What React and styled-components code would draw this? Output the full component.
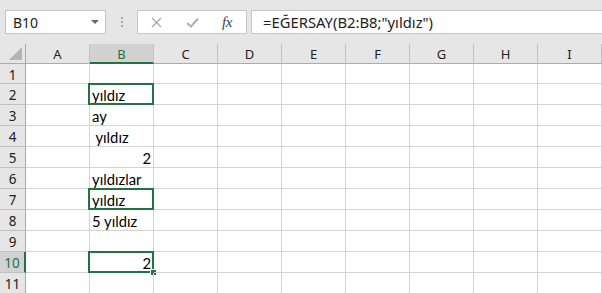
import React from 'react';
import styled, { createGlobalStyle } from 'styled-components';

const GlobalStyle = createGlobalStyle`
    html, body {
        margin: 0;
        padding: 0;
        background: #ffffff;
        overflow: hidden;
    }
`;

const Page = styled.div`
    width: 602px;
    height: 293px;
    overflow: hidden;
    font-family: "Noto Sans", "Open Sans", sans-serif;
`;

const Toolbar = styled.div`
    height: 44px;
    background: #e6e6e6;
    display: flex;
    align-items: flex-start;
    padding-top: 10px;
    padding-left: 5px;
    box-sizing: border-box;
`;

const NameBox = styled.div`
    width: 101px;
    height: 24px;
    box-sizing: border-box;
    background: #ffffff;
    border: 1px solid #c6c6c6;
    display: flex;
    align-items: center;
    justify-content: space-between;
    padding: 0 6px 0 7px;
    font-size: 14px;
    color: #222;
`;

const Caret = styled.span`
    width: 0;
    height: 0;
    border-left: 4px solid transparent;
    border-right: 4px solid transparent;
    border-top: 4px solid #6a6a6a;
`;

const Grip = styled.div`
    width: 31px;
    height: 24px;
    display: flex;
    flex-direction: column;
    align-items: center;
    justify-content: center;
    gap: 2px;
    & span {
        width: 2px;
        height: 2px;
        background: #a8a8a8;
    }
`;

const ButtonBox = styled.div`
    width: 110px;
    height: 24px;
    box-sizing: border-box;
    background: #ffffff;
    border: 1px solid #c6c6c6;
    display: flex;
    align-items: center;
    padding-left: 13px;
    gap: 24px;
`;

const Fx = styled.span`
    font-family: "Liberation Serif", serif;
    font-style: italic;
    font-size: 15px;
    color: #444;
    margin-left: -1px;
    letter-spacing: -0.5px;
`;

const FormulaBox = styled.div`
    flex: 1;
    margin-left: 4px;
    margin-right: -10px;
    height: 24px;
    box-sizing: border-box;
    background: #ffffff;
    border: 1px solid #c6c6c6;
    display: flex;
    align-items: center;
    padding-left: 11px;
    font-size: 14.8px;
    color: #222;
    white-space: nowrap;
`;

const Grid = styled.div`
    display: flex;
    flex-direction: column;
`;

const Row = styled.div`
    display: flex;
    height: ${p => p.h}px;
`;

const Corner = styled.div`
    width: 26px;
    box-sizing: border-box;
    background: #e6e6e6;
    border-right: 1px solid #ababab;
    border-bottom: 1px solid #ababab;
    position: relative;
    &::after {
        content: '';
        position: absolute;
        right: 3px;
        bottom: 3px;
        width: 0;
        height: 0;
        border-left: 13px solid transparent;
        border-bottom: 13px solid #b4b4b4;
    }
`;

const ColHead = styled.div`
    width: 64px;
    box-sizing: border-box;
    background: ${p => (p.active ? '#d2d2d2' : '#e6e6e6')};
    border-right: 1px solid #c0c0c0;
    border-bottom: ${p => (p.active ? '2px solid #217346' : '1px solid #ababab')};
    display: flex;
    align-items: center;
    justify-content: center;
    padding-top: ${p => (p.active ? '1px' : '0')};
    font-size: 13px;
    color: ${p => (p.active ? '#217346' : '#222')};
`;

const RowHead = styled.div`
    width: 26px;
    box-sizing: border-box;
    background: ${p => (p.active ? '#d2d2d2' : '#e6e6e6')};
    border-right: ${p => (p.active ? '2px solid #217346' : '1px solid #ababab')};
    border-bottom: 1px solid #c0c0c0;
    display: flex;
    align-items: center;
    justify-content: center;
    padding-top: 2px;
    font-size: 13.5px;
    color: ${p => (p.active ? '#217346' : '#222')};
`;

const Cell = styled.div`
    width: 64px;
    box-sizing: border-box;
    border-right: 1px solid #d4d4d4;
    border-bottom: 1px solid #d4d4d4;
    position: relative;
    display: flex;
    align-items: flex-end;
    justify-content: ${p => (p.num ? 'flex-end' : 'flex-start')};
    padding: 0 2px 1px 2px;
    font-family: "Lato", "Carlito", sans-serif;
    font-size: 14.8px;
    line-height: 16px;
    color: #000;
    white-space: pre;
`;

const Outline = styled.div`
    position: absolute;
    top: -1px;
    left: -2px;
    right: -1px;
    bottom: -1px;
    border: 2px solid #217346;
    pointer-events: none;
`;

const Handle = styled.div`
    position: absolute;
    right: -4px;
    bottom: -4px;
    width: 5px;
    height: 5px;
    background: #217346;
    border: 1px solid #ffffff;
`;

const columns = ['A', 'B', 'C', 'D', 'E', 'F', 'G', 'H', 'I'];

const data = {
    2: { text: 'yıldız', box: true },
    3: { text: 'ay' },
    4: { text: ' yıldız' },
    5: { text: '2', num: true },
    6: { text: 'yıldızlar' },
    7: { text: 'yıldız', box: true },
    8: { text: '5 yıldız' },
    10: { text: '2', num: true, box: true, selected: true },
};

const XIcon = () => (
    <svg width="11" height="11" viewBox="0 0 11 11">
        <path d="M1 1 L10 10 M10 1 L1 10" stroke="#a6a6a6" strokeWidth="1.2" fill="none" />
    </svg>
);

const CheckIcon = () => (
    <svg width="13" height="11" viewBox="0 0 13 11">
        <path d="M1 6 L5 9.5 L12 1.5" stroke="#b0b0b0" strokeWidth="2" fill="none" />
    </svg>
);

const App = () => {
    const rows = Array.from({ length: 11 }, (_, i) => i + 1);
    return (
        <Page>
            <GlobalStyle />
            <Toolbar>
                <NameBox>
                    B10
                    <Caret />
                </NameBox>
                <Grip>
                    <span />
                    <span />
                    <span />
                </Grip>
                <ButtonBox>
                    <XIcon />
                    <CheckIcon />
                    <Fx>fx</Fx>
                </ButtonBox>
                <FormulaBox>=EĞERSAY(B2:B8;"yıldız")</FormulaBox>
            </Toolbar>
            <Grid>
                <Row h={20}>
                    <Corner />
                    {columns.map(c => (
                        <ColHead key={c} active={c === 'B'}>{c}</ColHead>
                    ))}
                </Row>
                {rows.map(r => {
                    const d = data[r];
                    return (
                        <Row key={r} h={r === 1 ? 20 : 21}>
                            <RowHead active={r === 10}>{r}</RowHead>
                            {columns.map(c => (
                                <Cell key={c} num={c === 'B' && d && d.num}>
                                    {c === 'B' && d ? d.text : ''}
                                    {c === 'B' && d && d.box && <Outline />}
                                    {c === 'B' && d && d.selected && <Handle />}
                                </Cell>
                            ))}
                        </Row>
                    );
                })}
            </Grid>
        </Page>
    );
};

export default App;
